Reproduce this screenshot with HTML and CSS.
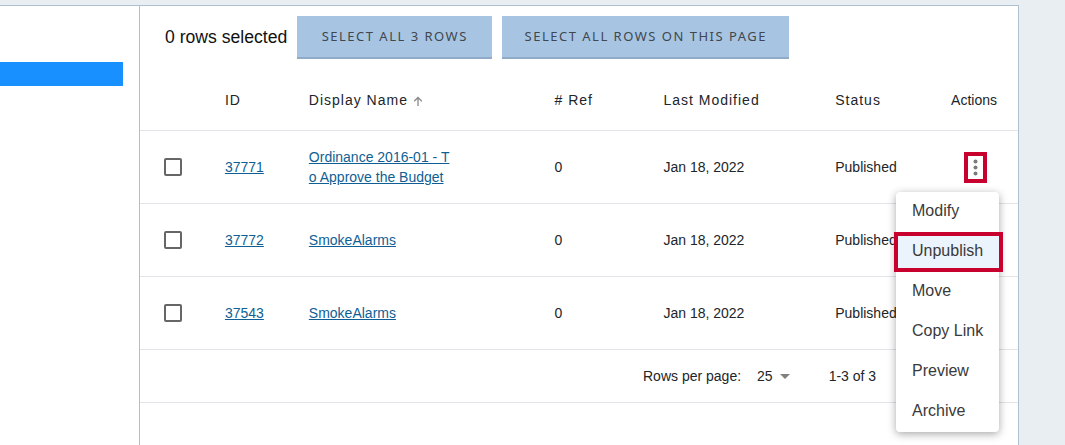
FILE: index.html
```html
<!DOCTYPE html>
<html lang="en">
  <head>
    <meta charset="UTF-8" />
    <title>Content List</title>
    <link rel="stylesheet" href="styles.css">
  </head>
  <body>
    <div class="top-strip"></div>
    <div class="layout">
      <aside class="sidebar">
        <div class="side-active"></div>
      </aside>
      <main class="panel">
        <div class="select-bar">
          <span class="select-count">0 rows selected</span>
          <button class="select-btn btn-rows" type="button">Select all 3 rows</button>
          <button class="select-btn btn-page" type="button">Select all rows on this page</button>
        </div>

        <div class="row head-row">
          <div class="col-check"></div>
          <div class="col-id">ID</div>
          <div class="col-name">Display Name <span class="sort-arrow">
            <svg width="10" height="10" viewBox="0 0 10 10"><path d="M5 10V1.5M1.2 5.2L5 1.5l3.8 3.7" fill="none" stroke="#8a8a8a" stroke-width="1.3"/></svg>
          </span></div>
          <div class="col-ref"># Ref</div>
          <div class="col-date">Last Modified</div>
          <div class="col-status">Status</div>
          <div class="col-actions">Actions</div>
        </div>

        <div class="row body-row">
          <div class="col-check"><span class="checkbox"></span></div>
          <div class="col-id"><a href="#">37771</a></div>
          <div class="col-name"><a href="#">Ordinance 2016-01 - T<br>o Approve the Budget</a></div>
          <div class="col-ref">0</div>
          <div class="col-date">Jan 18, 2022</div>
          <div class="col-status">Published</div>
          <div class="col-actions">
            <span class="kebab">
              <svg width="5" height="17" viewBox="0 0 5 17"><circle cx="2.5" cy="2.5" r="2"/><circle cx="2.5" cy="8.5" r="2"/><circle cx="2.5" cy="14.5" r="2"/></svg>
            </span>
          </div>
        </div>

        <div class="row body-row">
          <div class="col-check"><span class="checkbox"></span></div>
          <div class="col-id"><a href="#">37772</a></div>
          <div class="col-name"><a href="#">SmokeAlarms</a></div>
          <div class="col-ref">0</div>
          <div class="col-date">Jan 18, 2022</div>
          <div class="col-status">Published</div>
          <div class="col-actions"></div>
        </div>

        <div class="row body-row">
          <div class="col-check"><span class="checkbox"></span></div>
          <div class="col-id"><a href="#">37543</a></div>
          <div class="col-name"><a href="#">SmokeAlarms</a></div>
          <div class="col-ref">0</div>
          <div class="col-date">Jan 18, 2022</div>
          <div class="col-status">Published</div>
          <div class="col-actions"></div>
        </div>

        <div class="pager">
          <span class="pager-label">Rows per page:</span>
          <span class="pager-size">25</span>
          <span class="pager-caret"></span>
          <span class="pager-range">1-3 of 3</span>
        </div>

        <ul class="action-menu">
          <li>Modify</li>
          <li class="menu-hot">Unpublish</li>
          <li>Move</li>
          <li>Copy Link</li>
          <li>Preview</li>
          <li>Archive</li>
        </ul>
      </main>
    </div>
  </body>
</html>
```

FILE: styles.css
```css
* {
  box-sizing: border-box;
  margin: 0;
  padding: 0;
}

html,
body {
  height: 445px;
  overflow: hidden;
}

body {
  background-color: #e9eef2;
  color: #212529;
  font-family: "Liberation Sans", Arial, sans-serif;
  font-size: 14px;
}

.top-strip {
  height: 5px;
}

.layout {
  display: flex;
  width: 1019px;
  height: 440px;
  border-top: 1px solid #aebfcd;
}

.sidebar {
  width: 139px;
  background-color: white;
  padding-top: 56px;
}

.side-active {
  width: 123px;
  height: 24px;
  background-color: #1890ff;
}

.panel {
  position: relative;
  width: 880px;
  background-color: white;
  border-left: 1px solid #aebfcd;
  border-right: 1px solid #aebfcd;
}

.select-bar {
  display: flex;
  align-items: center;
  gap: 10px;
  height: 43px;
  margin-top: 10px;
  padding-left: 25px;
}

.select-count {
  margin-bottom: 1px;
  font-size: 17.6px;
  color: #111;
}

.select-btn {
  height: 43px;
  padding-bottom: 2px;
  border: none;
  border-bottom: 2px solid #8fabc8;
  background-color: #a7c5e3;
  color: #41474d;
  font-family: "Noto Sans", sans-serif;
  font-size: 13px;
  letter-spacing: 1.5px;
  text-transform: uppercase;
}

.btn-rows {
  width: 195px;
}

.btn-page {
  width: 287px;
}

.row {
  display: flex;
  align-items: center;
  border-bottom: 1px solid #e2e5e8;
}

.head-row {
  height: 72px;
  padding-top: 11px;
  letter-spacing: 1px;
}

.body-row {
  height: 73px;
}

.col-check {
  width: 85px;
  padding-left: 24px;
  display: flex;
}

.col-id {
  width: 84px;
}

.col-name {
  width: 246px;
  line-height: 20px;
}

.col-ref {
  width: 109px;
}

.col-date {
  width: 172px;
}

.col-status {
  width: 116px;
}

.col-actions {
  width: 67px;
  letter-spacing: 0;
  white-space: nowrap;
}

.row a {
  color: #0f5f94;
}

.sort-arrow svg {
  vertical-align: -1px;
}

.checkbox {
  width: 18px;
  height: 18px;
  border: 2px solid #666;
  border-radius: 2px;
}

.kebab {
  display: flex;
  align-items: center;
  justify-content: center;
  width: 23px;
  height: 31px;
  margin-left: 13px;
  border: 4px solid #c8002d;
}

.kebab svg {
  fill: #7a7a7a;
}

.pager {
  display: flex;
  align-items: center;
  height: 53px;
  padding-left: 503px;
  border-bottom: 1px solid #e2e5e8;
}

.pager-size {
  margin-left: 16px;
  margin-top: -1px;
}

.pager-caret {
  margin-left: 7px;
  border-left: 5px solid transparent;
  border-right: 5px solid transparent;
  border-top: 5px solid #808080;
}

.pager-range {
  margin-left: 39px;
}

.action-menu {
  position: absolute;
  left: 756px;
  top: 186px;
  width: 103px;
  list-style: none;
  background-color: white;
  border-radius: 4px;
  box-shadow: 0 2px 8px rgba(0, 0, 0, 0.35);
  font-size: 16px;
  color: #3a3a3a;
}

.action-menu li {
  height: 40px;
  line-height: 38px;
  padding-left: 16px;
  white-space: nowrap;
}

.menu-hot {
  position: relative;
  background-color: #ebf3fc;
}

.menu-hot:after {
  content: "";
  position: absolute;
  left: -2px;
  right: -4px;
  top: 0;
  bottom: 0;
  border: 4px solid #c8002d;
}
```
